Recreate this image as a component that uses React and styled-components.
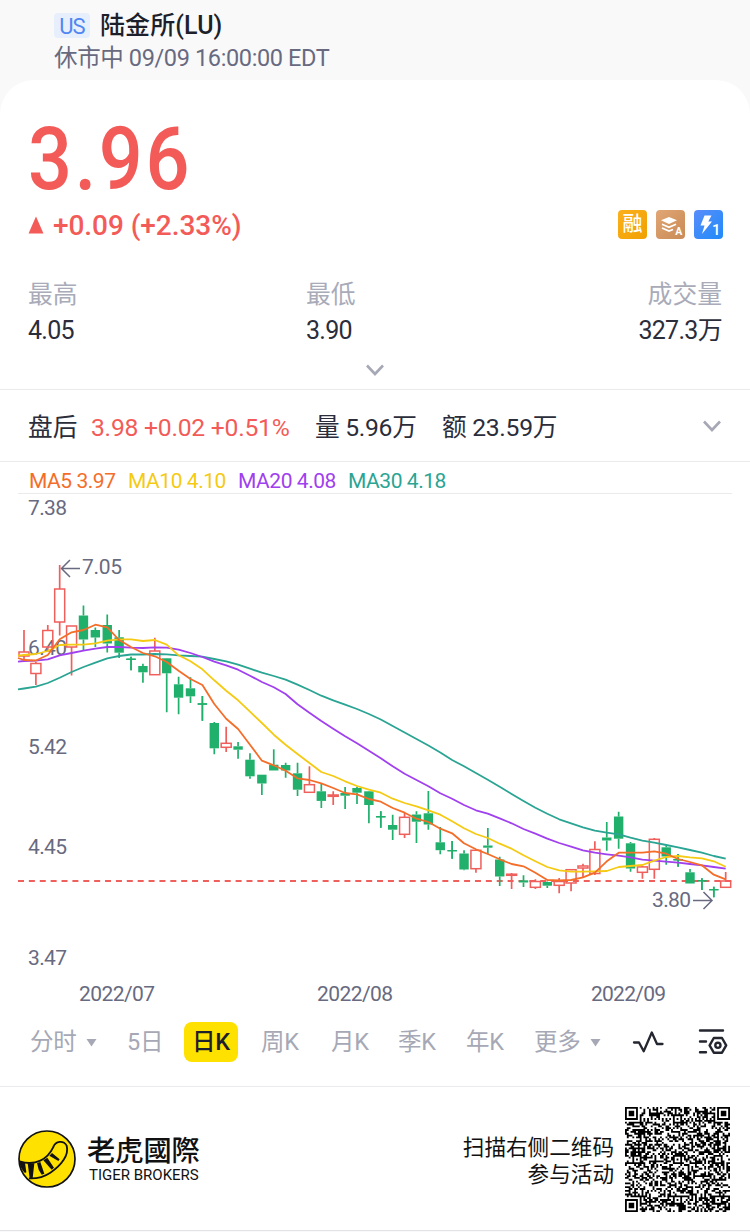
import React from 'react';
import styled, { createGlobalStyle } from 'styled-components';

const GlobalStyle = createGlobalStyle`
  * {
    box-sizing: border-box;
  }

  body {
    margin: 0;
    background-color: #f9f9fa;
    font-family: Roboto, 'Noto Sans CJK SC', sans-serif;
    color: #2b2d3a;
  }
`;

const Page = styled.div`
  width: 750px;
  height: 1232px;
  overflow: hidden;
`;

const Header = styled.header`
  height: 80px;
  padding: 10px 0 0 54px;
`;

const TitleRow = styled.div`
  display: flex;
  align-items: center;
  height: 31px;
`;

const Market = styled.span`
  width: 36px;
  height: 25px;
  margin-right: 10px;
  border-radius: 4px;
  background-color: #e8effc;
  color: #5086f2;
  font-size: 22px;
  line-height: 27px;
  text-align: center;
  letter-spacing: -0.8px;
`;

const Title = styled.h1`
  margin: 0;
  font-size: 25px;
  font-weight: 500;
  line-height: 31px;
  letter-spacing: 0.1px;
  color: #1d1f2b;
`;

const Status = styled.p`
  margin: 0;
  font-size: 23.5px;
  line-height: 34px;
  letter-spacing: -0.37px;
  color: #686a80;
`;

const Card = styled.main`
  height: 1151px;
  border-radius: 34px 34px 0 0;
  border-bottom: 1px solid #e3e3e6;
  background-color: #fff;
`;

const Quote = styled.section`
  height: 310px;
  padding: 35px 28px 0;
  border-bottom: 1px solid #ebebee;
`;

const Price = styled.div`
  height: 88px;
  font-size: 88px;
  font-weight: 500;
  line-height: 88px;
  letter-spacing: 3px;
  color: #f35b58;
  transform: scaleX(0.88);
  transform-origin: left;
`;

const ChangeRow = styled.div`
  display: flex;
  align-items: center;
  height: 44px;
  color: #f35b58;
`;

const Change = styled.span`
  flex: 1;
  margin: 1px 0 0 9px;
  font-size: 28px;
  font-weight: 500;
  line-height: 44px;
  letter-spacing: -0.05px;
`;

const Badges = styled.div`
  display: flex;
  gap: 9px;
  margin: -1px -1px 0 0;
`;

const Badge = styled.span`
  display: flex;
  align-items: center;
  justify-content: center;
  width: 29px;
  height: 29px;
  border-radius: 4px;
  background: ${({ $from, $to }) => `linear-gradient(135deg, ${$from}, ${$to})`};
  color: #fff;
  font-size: 20px;
  font-weight: 500;
  line-height: 29px;
`;

const Stats = styled.div`
  display: grid;
  grid-template-columns: 278px 1fr auto;
  margin-top: 30px;
`;

const Stat = styled.div`
  text-align: ${({ $align }) => $align || 'left'};
`;

const StatLabel = styled.div`
  font-size: 24.8px;
  line-height: 36px;
  color: #a9abb9;
`;

const StatValue = styled.div`
  font-size: 25px;
  line-height: 36px;
  letter-spacing: -0.7px;
`;

const Expand = styled.div`
  display: flex;
  justify-content: center;
  padding-top: 15px;
`;

const AfterHours = styled.section`
  display: flex;
  align-items: center;
  height: 72px;
  padding: 4px 29px 0 28px;
  border-bottom: 1px solid #ebebee;
  font-size: 24.7px;
  line-height: 36px;
`;

const AfterItem = styled.span`
  width: ${({ $width }) => $width}px;
  letter-spacing: ${({ $spacing }) => $spacing || 0}px;
  white-space: nowrap;
  color: ${({ $up }) => ($up ? '#f35b58' : 'inherit')};
`;

const AfterToggle = styled.span`
  display: flex;
  margin: -4px 0 0 auto;
`;

const Averages = styled.div`
  display: flex;
  height: 32px;
  margin: 0 18px;
  padding: 3px 0 0 11px;
  border-bottom: 1px solid #ebebee;
`;

const Average = styled.span`
  width: ${({ $width }) => $width}px;
  font-size: 21px;
  line-height: 32px;
  letter-spacing: -0.45px;
  white-space: nowrap;
  color: ${({ $color }) => $color};
`;

const Chart = styled.svg`
  display: block;
`;

const AxisText = styled.text`
  font-size: 21px;
  fill: #686a80;
`;

const Tabs = styled.nav`
  display: grid;
  grid-template-columns: 97px 57px 77px 70px 67px 68px 68px 98px 66px 30px;
  align-items: center;
  height: 74px;
  padding: 0 0 15px 30px;
  border-bottom: 1px solid #ebebee;
`;

const Tab = styled.span`
  display: flex;
  align-items: center;
  gap: 9px;
  padding-top: 1px;
  font-size: 23.5px;
  line-height: 41px;
  letter-spacing: -0.2px;
  color: #a6a8b5;
`;

const ActiveTab = styled(Tab)`
  justify-content: center;
  width: 54px;
  height: 40px;
  border-radius: 8px;
  background-color: #ffe100;
  color: #1d1f2b;
  font-weight: 500;
`;

const Footer = styled.footer`
  display: flex;
  align-items: center;
  padding: 20px 20px 0 18px;
`;

const Brand = styled.div`
  flex: 1;
  margin-left: 11px;
  color: #111;
`;

const BrandName = styled.div`
  font-family: 'Noto Sans CJK TC', sans-serif;
  font-size: 28.2px;
  font-weight: 500;
  line-height: 31px;
`;

const BrandLatin = styled.div`
  margin: 1px 0 0 2px;
  font-size: 15px;
  line-height: 21px;
`;

const ScanText = styled.p`
  margin: 2px 11px 0 0;
  font-size: 21.6px;
  line-height: 27px;
  text-align: right;
  color: #111;
`;

const RED = '#ef5f5c';
const GREEN = '#20b06c';
const CHART_TOP = 493;

// [rising, high, bodyTop, bodyBottom, low]
const candles = [
  [1, 630, 652, 656, 660],
  [1, 662, 663.5, 673.5, 685],
  [1, 625, 630.5, 647, 650],
  [1, 565, 589, 622, 635.5],
  [1, 626, 626, 647, 675.5],
  [0, 605.5, 615.5, 639.5, 650.5],
  [0, 627.5, 630, 637.5, 647],
  [0, 614.5, 625, 643.5, 652.5],
  [0, 630, 637.3, 652.7, 658],
  [0, 656.7, 658.7, 660, 670.3],
  [0, 663.7, 666, 672.3, 682.7],
  [1, 637.7, 651, 674.7, 674.7],
  [0, 658, 658.3, 673.3, 712.3],
  [0, 676.7, 684.3, 697.7, 714.3],
  [0, 677.3, 688.3, 696.3, 703],
  [0, 696, 703.3, 704.7, 720.7],
  [0, 722, 723, 748.3, 754.3],
  [1, 726.7, 743.3, 747.3, 752],
  [0, 742, 746.3, 749.7, 758.7],
  [0, 753.3, 759.7, 776.3, 778.7],
  [0, 774.7, 774.7, 783.5, 795],
  [0, 749.3, 764.7, 770.5, 770.5],
  [0, 762.7, 765, 770.5, 777.7],
  [0, 762.7, 773.3, 789.7, 796],
  [1, 766.3, 784.7, 792.3, 792.3],
  [0, 783.7, 791.3, 800.9, 808],
  [1, 791.3, 795, 796.3, 805],
  [0, 787, 793, 795.7, 809],
  [0, 786.7, 788, 792.7, 804],
  [0, 791, 791.3, 805, 823.3],
  [0, 811.3, 816, 817.3, 827.7],
  [0, 814.7, 825, 829.7, 840],
  [1, 812.7, 817.3, 834.3, 838],
  [0, 811.3, 814.5, 821.7, 843],
  [0, 791, 813.3, 824.5, 829.7],
  [0, 827, 842.3, 850.2, 854.3],
  [0, 841, 850.3, 851, 858.7],
  [0, 850.3, 853.5, 869.5, 870.3],
  [1, 849.5, 850.3, 868.7, 872.7],
  [0, 828, 845.5, 847.7, 854.3],
  [0, 856.7, 859.5, 876.5, 886],
  [1, 873, 874.2, 875.3, 889],
  [0, 875.3, 880.3, 882.5, 887],
  [1, 879.3, 881.5, 887.3, 889],
  [0, 881.5, 882, 885.7, 888],
  [1, 878, 881.5, 885.3, 893.3],
  [1, 869, 869.7, 883, 891.3],
  [1, 863.7, 866, 868, 878],
  [1, 841.3, 849.5, 873.5, 875],
  [0, 822, 837.5, 840.5, 850.7],
  [0, 811.7, 816.5, 838.7, 848.7],
  [0, 842, 843.3, 868.5, 871.7],
  [1, 865.7, 866.9, 872.3, 878.7],
  [1, 838, 839.3, 869.3, 878.7],
  [0, 846, 847.3, 856.5, 864.7],
  [0, 854, 859, 860.3, 866.7],
  [0, 869, 872.3, 883.5, 883.5],
  [0, 878.3, 880.3, 881.3, 890],
  [0, 886.7, 889.3, 890, 897.3],
  [1, 872, 881, 887.3, 887.3],
];

// First value of each line sits on the left edge of the plot
const averages = [
  {
    color: '#2aa493',
    values: [
      689.3, 688.5, 686.7, 683, 677.7, 672, 667, 662.7, 658.3, 656, 654.5, 654.5, 654, 654.3, 655.3,
      656, 656.7, 659, 661.3, 664.7, 668.7, 672.7, 676, 679.7, 684.7, 690, 695.7, 700.3, 704.7, 709,
      714, 719.5, 726, 732.5, 739, 745.5, 752.5, 760, 766.3, 773, 779.7, 786.7, 794, 801, 807.7,
      813.7, 819.3, 823.3, 827.3, 830.7, 832.7, 834.3, 837.7, 840.7, 842.7, 845, 847.3, 850, 852.7,
      856, 858.7,
    ],
  },
  {
    color: '#a040ee',
    values: [
      661.7, 661, 660.7, 659.3, 655.3, 653, 650.7, 648.7, 647, 647, 647.7, 648, 647.3, 647.7, 649.7,
      653, 657, 661.7, 665.3, 669.7, 675.7, 682, 687.3, 694, 704.3, 712.7, 721, 728.7, 736.3, 743.3,
      750.7, 758.3, 766.3, 773.7, 780, 786.3, 793.3, 798.7, 805, 810.3, 813.7, 818.3, 823.3, 829,
      833.7, 838.7, 843, 846.7, 850.3, 852.7, 854.3, 855.7, 857.3, 859.7, 860.7, 861.7, 862.7, 864,
      865.3, 867, 868.7,
    ],
  },
  {
    color: '#f5ca13',
    values: [
      655.7, 655, 654, 651, 645, 644.7, 644.7, 643.3, 640.7, 639.3, 639.3, 641, 640, 644.7, 655.3,
      661.3, 669.3, 680.3, 690.7, 700.3, 711.7, 723, 734.7, 744.7, 754, 763, 772, 776, 781.3, 786,
      789.7, 792.7, 798.7, 803, 806.3, 810.3, 814.7, 821.3, 828.3, 834, 838, 843.7, 848.7, 855.3,
      861.3, 867, 870.3, 871.7, 871.7, 871.3, 871, 867, 866, 865, 860.7, 857, 856, 857.3, 858.3,
      861.3, 866.7,
    ],
  },
  {
    color: '#f46d29',
    values: [
      658, 660, 660.5, 655, 639.3, 632.3, 630, 624.7, 627.3, 640, 647, 653, 656.3, 662, 670.7, 679,
      685, 704, 718.7, 729, 744.7, 760.7, 765.3, 770.7, 778.3, 780, 783.3, 788, 793, 794.3, 799,
      801.7, 808, 812.7, 818.7, 822, 828.7, 833.3, 843.3, 849.3, 854, 859.3, 864, 866.3, 872.7, 880,
      880.3, 880, 877.3, 872.7, 861.3, 852.7, 852.7, 852.7, 851.3, 853.7, 859, 862, 865.3, 874.7,
      879.3,
    ],
  },
];

const candleX = i => 24 + i * 11.893;

const linePoints = values =>
  values
    .map((y, i) => `${i === 0 ? 18 : candleX(i - 1).toFixed(1)},${(y - CHART_TOP).toFixed(1)}`)
    .join(' ');

const Candle = ({ index, data }) => {
  const [rising, high, top, bottom, low] = data;
  const x = candleX(index);
  const color = rising ? RED : GREEN;
  const h = high - CHART_TOP;
  const t = top - CHART_TOP;
  const b = bottom - CHART_TOP;
  const l = low - CHART_TOP;

  return (
    <g stroke={color} fill={rising ? 'none' : color}>
      <path d={`M${x} ${h}V${t}M${x} ${b}V${l}`} strokeWidth="1.7" />
      {rising ? (
        <rect x={x - 5} y={t} width="10" height={b - t} strokeWidth="1.5" />
      ) : (
        <rect x={x - 4.7} y={t} width="9.4" height={b - t} stroke="none" />
      )}
      {!rising && b - t < 2 && <path d={`M${x - 4.7} ${(t + b) / 2}h9.4M${x} ${h}V${l}`} strokeWidth="1.5" />}
    </g>
  );
};

const PriceChart = () => (
  <Chart width="750" height="519" viewBox="0 1 750 519">
    <AxisText x="28" y="22" textLength="39">7.38</AxisText>
    <AxisText x="28" y="162" textLength="39">6.40</AxisText>
    <AxisText x="28" y="261" textLength="39">5.42</AxisText>
    <AxisText x="28" y="361" textLength="39">4.45</AxisText>
    <AxisText x="28" y="472" textLength="39">3.47</AxisText>
    <path d="M18 388H732" stroke={RED} strokeWidth="2" strokeDasharray="6 4.880" />
    {candles.map((candle, i) => (
      <Candle key={i} index={i} data={candle} />
    ))}
    {averages.map(({ color, values }) => (
      <polyline key={color} points={linePoints(values)} fill="none" stroke={color} strokeWidth="1.8" strokeLinejoin="round" />
    ))}
    <g fill="none" stroke="#686a80" strokeWidth="1.5">
      <path d="M70 67L61.5 75.5L70 84M61.500 75.500H80" />
      <path d="M703.5 399L712 407.500L703.5 416M693 407.500H712" />
    </g>
    <AxisText x="82" y="81" textLength="40">7.05</AxisText>
    <AxisText x="652" y="414" textLength="39">3.80</AxisText>
    <AxisText x="79" y="508" textLength="76">2022/07</AxisText>
    <AxisText x="317" y="508" textLength="76">2022/08</AxisText>
    <AxisText x="591" y="508" textLength="75">2022/09</AxisText>
  </Chart>
);

const Chevron = () => (
  <svg width="18" height="12" viewBox="0 0 18 12" fill="none" stroke="#a6a8b5" strokeWidth="2.6">
    <path d="M1 1.500L9 10L17 1.500" />
  </svg>
);

const Caret = () => (
  <svg width="11" height="8" viewBox="0 0 11 8" fill="#a6a8b5">
    <path d="M0.500 0H10.500L5.500 7.500Z" />
  </svg>
);

const LayersIcon = () => (
  <svg width="29" height="29" viewBox="0 0 29 29">
    <path d="M5 10.200L13 7L21 10.200L13 14Z" fill="#fff" />
    <path d="M6 14.200L13 17.300L20 14.200M6 18L13 21L17 19.500" fill="none" stroke="#fff" strokeWidth="1.800" />
    <text x="19.300" y="24.500" fontSize="10.500" fontWeight="700" fill="#fff">A</text>
  </svg>
);

const BoltIcon = () => (
  <svg width="29" height="29" viewBox="0 0 29 29">
    <path d="M10.500 5.500H17.500L14.300 11.500H18L8 24L10.500 15.500H6.500Z" fill="#fff" />
    <text x="18" y="25" fontSize="15" fontWeight="500" fill="#fff">1</text>
  </svg>
);

const PulseIcon = () => (
  <svg width="32" height="24" viewBox="0 0 32 24" fill="none" stroke="#23252f" strokeWidth="2.300" strokeLinecap="round" strokeLinejoin="round">
    <path d="M2 12.500H7L11.700 21.200L19.800 2.500L25 14H30.500" />
  </svg>
);

const ChartSettingsIcon = () => (
  <svg width="30" height="26" viewBox="0 0 30 26" fill="none" stroke="#23252f" strokeWidth="2.400" strokeLinecap="round" strokeLinejoin="round">
    <path d="M2 1.500H25M2 12.500H8M2 23.300H8" />
    <path d="M15.800 9H24L28.200 16.300L24 23.700H15.800L11.600 16.300Z" />
    <circle cx="19.900" cy="16.300" r="2.600" />
  </svg>
);

const LogoMark = styled.svg`
  margin-top: -1px;
`;

const TigerLogo = () => (
  <LogoMark width="58" height="58" viewBox="55 61 174 174">
    <circle cx="142" cy="148" r="84" fill="#ffe100" stroke="#111" strokeWidth="5" />
    <path
      d="M60 155C108 170 144 148 160 114C168 92 192 92 201 108C209 136 184 168 152 189C134 201 108 207 88 206"
      fill="none"
      stroke="#111"
      strokeWidth="5.500"
    />
    <path
      d="M59 154L76 159L80 188L76 190Q62 178 59 154ZM84 161L104 161L99 206H90ZM112 160L122 157L134 192L126 195L117 180ZM131 152L143 144L163 174L156 180ZM149 138L157 130L180 149L176 154Z"
      fill="#111"
    />
  </LogoMark>
);

const QR_SIZE = 57;
const QR_CENTERS = [6, 28, 50];

const isDark = (x, y) => {
  const last = QR_SIZE - 1;
  const cx = x > last / 2 ? last - x : x;
  const cy = y > last / 2 ? last - y : y;
  const inFinder = cx < 8 && cy < 8 && !(x > 28 && y > 28);
  if (inFinder) {
    const ring = Math.max(Math.abs(cx - 3), Math.abs(cy - 3));
    return ring !== 2 && ring !== 4;
  }
  const ax = QR_CENTERS.find(c => Math.abs(c - x) < 3);
  const ay = QR_CENTERS.find(c => Math.abs(c - y) < 3);
  if (ax !== undefined && ay !== undefined) {
    return Math.max(Math.abs(ax - x), Math.abs(ay - y)) !== 1;
  }
  if (x === 6 || y === 6) return (x + y) % 2 === 0;
  const n = Math.sin(x * 12.9898 + y * 78.233) * 43758.5453;
  return n - Math.floor(n) < 0.51;
};

const qrPath = () => {
  let d = '';
  for (let y = 0; y < QR_SIZE; y += 1) {
    for (let x = 0; x < QR_SIZE; x += 1) {
      if (isDark(x, y)) d += `M${x} ${y}h1v1h-1z`;
    }
  }
  return d;
};

const QrCode = () => (
  <svg width="105" height="105" viewBox="0 0 57 57">
    <path d={qrPath()} fill="#000" />
  </svg>
);

const App = () => (
  <>
    <GlobalStyle />
    <Page>
      <Header>
        <TitleRow>
          <Market>US</Market>
          <Title>陆金所(LU)</Title>
        </TitleRow>
        <Status>休市中 09/09 16:00:00 EDT</Status>
      </Header>
      <Card>
        <Quote>
          <Price>3.96</Price>
          <ChangeRow>
            <svg width="16" height="18" viewBox="0 0 16 18" fill="#f35b58">
              <path d="M8 0.500L15.500 17.500H0.500Z" />
            </svg>
            <Change>+0.09 (+2.33%)</Change>
            <Badges>
              <Badge $from="#fbb01c" $to="#f0a000">融</Badge>
              <Badge $from="#e0a673" $to="#c98b58">
                <LayersIcon />
              </Badge>
              <Badge $from="#5a8dfb" $to="#1f8bf8">
                <BoltIcon />
              </Badge>
            </Badges>
          </ChangeRow>
          <Stats>
            <Stat>
              <StatLabel>最高</StatLabel>
              <StatValue>4.05</StatValue>
            </Stat>
            <Stat>
              <StatLabel>最低</StatLabel>
              <StatValue>3.90</StatValue>
            </Stat>
            <Stat $align="right">
              <StatLabel>成交量</StatLabel>
              <StatValue>327.3万</StatValue>
            </Stat>
          </Stats>
          <Expand>
            <Chevron />
          </Expand>
        </Quote>
        <AfterHours>
          <AfterItem $width={63}>盘后</AfterItem>
          <AfterItem $width={224} $spacing={-0.25} $up>3.98 +0.02 +0.51%</AfterItem>
          <AfterItem $width={127} $spacing={-0.3}>量 5.96万</AfterItem>
          <AfterItem $width={140} $spacing={-0.3}>额 23.59万</AfterItem>
          <AfterToggle>
            <Chevron />
          </AfterToggle>
        </AfterHours>
        <Averages>
          <Average $width={99} $color="#f46d29">MA5 3.97</Average>
          <Average $width={110} $color="#f5ca13">MA10 4.10</Average>
          <Average $width={110} $color="#a040ee">MA20 4.08</Average>
          <Average $width={110} $color="#2aa493">MA30 4.18</Average>
        </Averages>
        <PriceChart />
        <Tabs>
          <Tab>分时 <Caret /></Tab>
          <Tab>5日</Tab>
          <ActiveTab>日K</ActiveTab>
          <Tab>周K</Tab>
          <Tab>月K</Tab>
          <Tab>季K</Tab>
          <Tab>年K</Tab>
          <Tab>更多 <Caret /></Tab>
          <PulseIcon />
          <ChartSettingsIcon />
        </Tabs>
        <Footer>
          <TigerLogo />
          <Brand>
            <BrandName>老虎國際</BrandName>
            <BrandLatin>TIGER BROKERS</BrandLatin>
          </Brand>
          <ScanText>
            扫描右侧二维码
            <br />
            参与活动
          </ScanText>
          <QrCode />
        </Footer>
      </Card>
    </Page>
  </>
);

export default App;
